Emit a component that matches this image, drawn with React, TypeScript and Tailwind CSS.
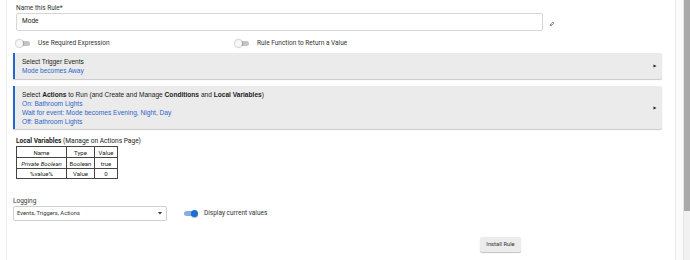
import React from "react";

function Toggle({ on }: { on?: boolean }) {
  return (
    <div className="relative w-[15px] h-[9px] flex items-center">
      <div
        className={
          on
            ? "w-[13px] h-[5px] rounded-full bg-[#86aee6] ml-[1px]"
            : "w-[13px] h-[5px] rounded-full bg-[#c4c4c4] ml-[1px]"
        }
      />
      <div
        className={
          on
            ? "absolute right-0 top-[1px] w-[7px] h-[7px] rounded-full bg-[#1b6fd4] shadow-[0_1px_1px_rgba(0,0,0,0.3)]"
            : "absolute left-0 top-[1px] w-[7px] h-[7px] rounded-full bg-[#f7f7f7] shadow-[0_0_1px_1px_rgba(0,0,0,0.18)]"
        }
      />
    </div>
  );
}

function Arrow() {
  return (
    <svg width="4" height="4" viewBox="0 0 4 4" className="shrink-0">
      <path d="M0.5 0.5 L3.5 2 L0.5 3.5 Z" fill="#222" />
    </svg>
  );
}

export default function App() {
  const roboto = { fontFamily: "Roboto, 'Liberation Sans', sans-serif" };
  const arial = { fontFamily: "'Liberation Sans', Arial, sans-serif" };
  return (
    <div className="w-[690px] h-[260px] bg-white flex overflow-hidden" style={roboto}>
      <div className="w-[7px] shrink-0 bg-white border-r border-[#ececec]" />
      <div className="w-[668px] shrink-0 flex flex-col pl-[6px] pr-[13px] text-[#222]">
        <div className="pl-[3px] pt-[4px]">
          <div className="text-[6.5px] leading-[9px] text-[#333]">Name this Rule*</div>
          <div className="flex items-center">
            <div className="w-[527px] h-[18px] border border-[#d6d6d6] rounded-[2px] flex items-center pl-[5px] text-[6.5px] text-[#222]">
              Mode
            </div>
            <svg width="6" height="5" viewBox="0 0 6 5" className="ml-[6px] mt-[2px]">
              <path d="M1 4 L2.5 2.5 L4 1 L5 2 L3 4 Z" fill="none" stroke="#777" strokeWidth="0.8" />
              <path d="M0.5 4.5 H3" stroke="#777" strokeWidth="0.7" />
            </svg>
          </div>
          <div className="flex items-center mt-[7px] h-[10px]">
            <div className="w-[219px] flex items-center">
              <Toggle />
              <span className="ml-[7px] text-[6.5px] leading-[9px] text-[#333]">Use Required Expression</span>
            </div>
            <div className="flex items-center">
              <Toggle />
              <span className="ml-[7px] text-[6.5px] leading-[9px] text-[#333]">Rule Function to Return a Value</span>
            </div>
          </div>
        </div>

        <div
          className="mt-[5px] h-[26px] bg-[#ebebeb] border-l-2 border-[#2068cf] shadow-[0_1px_1px_rgba(0,0,0,0.22)] rounded-r-[2px] flex items-center pl-[7px] pr-[5px]"
          style={arial}
        >
          <div className="flex-1 text-[6.5px] leading-[9px]">
            <div className="text-[#222]">Select Trigger Events</div>
            <div className="text-[#2d66c9]">Mode becomes Away</div>
          </div>
          <Arrow />
        </div>

        <div
          className="mt-[7px] h-[43px] bg-[#ebebeb] border-l-2 border-[#2068cf] shadow-[0_1px_1px_rgba(0,0,0,0.22)] rounded-r-[2px] flex items-center pl-[7px] pr-[5px]"
          style={arial}
        >
          <div className="flex-1 text-[6.6px] leading-[9px]">
            <div className="text-[#222]">
              Select <b>Actions</b> to Run (and Create and Manage <b>Conditions</b> and <b>Local Variables</b>)
            </div>
            <div className="text-[#2d66c9]">On: Bathroom Lights</div>
            <div className="text-[#2d66c9]">Wait for event: Mode becomes Evening, Night, Day</div>
            <div className="text-[#2d66c9]">Off: Bathroom Lights</div>
          </div>
          <Arrow />
        </div>

        <div className="pl-[3px] mt-[8px]">
          <div className="text-[6.6px] leading-[8px] text-[#222]">
            <b>Local Variables</b> (Manage on Actions Page)
          </div>
          <table className="mt-[1px] border-collapse border-[1.5px] border-[#222] text-[6px] leading-[9px] text-center text-[#222]">
            <tbody>
              <tr>
                <td className="border border-[#444] w-[50px] h-[11px]">Name</td>
                <td className="border border-[#444] w-[28px]">Type</td>
                <td className="border border-[#444] w-[23px]">Value</td>
              </tr>
              <tr>
                <td className="border border-[#444] h-[11px] italic">Private Boolean</td>
                <td className="border border-[#444]">Boolean</td>
                <td className="border border-[#444]">true</td>
              </tr>
              <tr>
                <td className="border border-[#444] h-[10px]">%value%</td>
                <td className="border border-[#444]">Value</td>
                <td className="border border-[#444]">0</td>
              </tr>
            </tbody>
          </table>
        </div>

        <div className="mt-[18px]">
          <div className="text-[6.5px] leading-[9px] text-[#333]">Logging</div>
          <div className="flex items-center">
            <div className="w-[154px] h-[15px] border border-[#cfcfcf] rounded-[2px] flex items-center pl-[3px] pr-[4px] text-[5.8px] text-[#333]">
              <span className="flex-1">Events, Triggers, Actions</span>
              <svg width="4" height="3" viewBox="0 0 4 3">
                <path d="M0 0 H4 L2 2.5 Z" fill="#333" />
              </svg>
            </div>
            <div className="ml-[16px]">
              <Toggle on />
            </div>
            <span className="ml-[6px] text-[6.5px] leading-[9px] text-[#333]">Display current values</span>
          </div>
        </div>

        <div className="mt-[16px] ml-[467px]">
          <div className="w-[41px] h-[15px] bg-[#ececec] rounded-[2px] shadow-[0_1px_1px_rgba(0,0,0,0.25)] flex items-center justify-center text-[5.8px] text-[#333]">
            Install Rule
          </div>
        </div>
      </div>
      <div className="w-[1px] shrink-0 bg-[#ebebeb]" />
      <div className="w-[7px] shrink-0 bg-[#fbfbfb]" />
      <div className="w-[7px] shrink-0 flex flex-col bg-[#f1f1f1] border-l border-[#e4e4e4]">
        <div className="h-[211px] bg-[#a9a9a9]" />
      </div>
    </div>
  );
}
